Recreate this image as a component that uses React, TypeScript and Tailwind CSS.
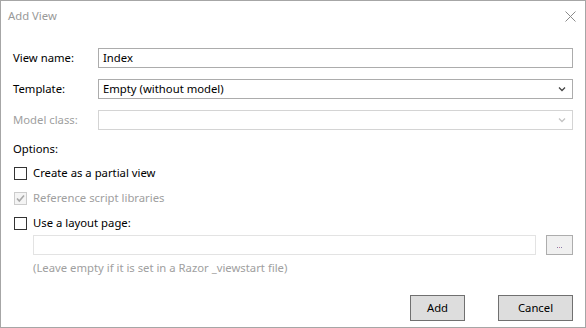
function Chevron({ disabled }: { disabled?: boolean }) {
  return (
    <svg width="8" height="6" viewBox="0 0 8 6" className="mr-[6px]">
      <path
        d="M1 1.5 L4 4.5 L7 1.5"
        fill="none"
        stroke={disabled ? '#c4c4c4' : '#444444'}
        strokeWidth="1.3"
      />
    </svg>
  );
}

function CheckBox({ checked, disabled }: { checked?: boolean; disabled?: boolean }) {
  return (
    <span
      className={
        'w-[13px] h-[13px] flex items-center justify-center border ' +
        (disabled ? 'border-[#cccccc] bg-[#f4f4f4]' : 'border-[#333333] bg-white')
      }
    >
      {checked && (
        <svg width="11" height="11" viewBox="0 0 11 11">
          <path d="M2 5.5 L4.3 8 L9 2.5" fill="none" stroke="#a8a8a8" strokeWidth="1.6" />
        </svg>
      )}
    </span>
  );
}

export default function App() {
  return (
    <div
      className="w-[586px] h-[328px] border border-[#a6a6a6] bg-white flex flex-col text-[11.3px] text-black overflow-hidden"
      style={{ fontFamily: '"Segoe UI", "Noto Sans", sans-serif' }}
    >
      <div className="h-[30px] flex items-center justify-between pl-[7px] pr-[9px]">
        <span className="text-[#999999] text-[11.3px] pt-[1px]">Add View</span>
        <svg width="11" height="11" viewBox="0 0 11 11">
          <path d="M0.5 0.5 L10.5 10.5 M10.5 0.5 L0.5 10.5" stroke="#8a8a8a" strokeWidth="1" />
        </svg>
      </div>

      <div className="flex flex-col pl-[12px] pr-[12px] pt-[17px]">
        <div className="grid grid-cols-[85px_1fr] gap-y-[11px] items-center">
          <span>View name:</span>
          <div className="h-[20px] border border-[#acacac] flex items-center pl-[4px]">Index</div>
          <span>Template:</span>
          <div className="h-[20px] border border-[#acacac] flex items-center justify-between pl-[4px]">
            <span>Empty (without model)</span>
            <Chevron />
          </div>
          <span className="text-[#a0a0a0]">Model class:</span>
          <div className="h-[20px] border border-[#d4d4d4] flex items-center justify-end">
            <Chevron disabled />
          </div>
        </div>

        <div className="h-[18px] mt-[10px] flex items-center">Options:</div>

        <div className="flex flex-col gap-[12px] mt-[9px] pl-[1px]">
          <label className="flex items-center gap-[6px] h-[13px]">
            <CheckBox />
            <span>Create as a partial view</span>
          </label>
          <label className="flex items-center gap-[6px] h-[13px] text-[#a0a0a0]">
            <CheckBox checked disabled />
            <span>Reference script libraries</span>
          </label>
          <label className="flex items-center gap-[6px] h-[13px]">
            <CheckBox />
            <span>Use a layout page:</span>
          </label>
        </div>

        <div className="flex items-center mt-[5px] pl-[20px] gap-[10px]">
          <div className="flex-1 h-[20px] border border-[#e3e3e3]"></div>
          <div className="w-[27px] h-[20px] border border-[#adadad] bg-[#f0f0f0] flex items-center justify-center gap-[1px] pt-[4px]">
            <span className="w-[1px] h-[1px] bg-[#8a7aa8]"></span>
            <span className="w-[1px] h-[1px] bg-[#c07a9a]"></span>
            <span className="w-[1px] h-[1px] bg-[#8a7aa8]"></span>
          </div>
        </div>

        <div className="pl-[20px] mt-[4px] text-[#a0a0a0] h-[18px] flex items-center">
          (Leave empty if it is set in a Razor _viewstart file)
        </div>

        <div className="flex justify-end gap-[33px] mt-[18px]">
          <button className="w-[55px] h-[26px] border border-[#707070] bg-[#dddddd] flex items-center justify-center">
            Add
          </button>
          <button className="w-[75px] h-[26px] border border-[#707070] bg-[#dddddd] flex items-center justify-center">
            Cancel
          </button>
        </div>
      </div>
    </div>
  );
}
